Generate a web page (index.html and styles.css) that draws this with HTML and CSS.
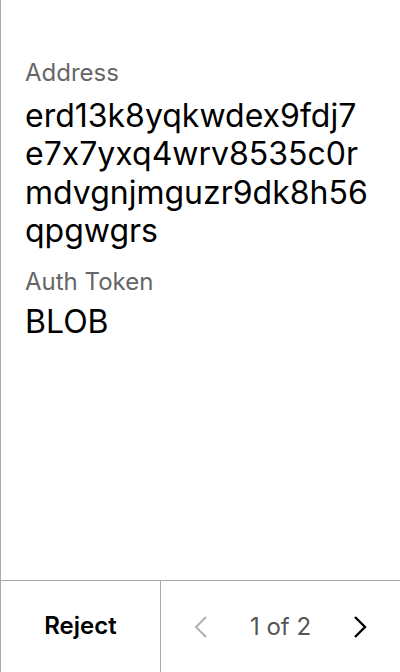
FILE: index.html
```html
<!DOCTYPE html>
<html>
<head>
<meta charset="utf-8">
<link rel="stylesheet" href="styles.css">
</head>
<body>
<div class="screen">
  <main class="content">
    <div class="label">Address</div>
    <div class="value">erd13k8yqkwdex9fdj7<br>e7x7yxq4wrv8535c0r<br>mdvgnjmguzr9dk8h56<br>qpgwgrs</div>
    <div class="label label-next">Auth Token</div>
    <div class="value value-token">BLOB</div>
  </main>
  <footer class="footer">
    <div class="reject">Reject</div>
    <div class="pager">
      <svg class="chev" width="16" height="24" viewBox="0 0 16 24"><path d="M13 2 L3 12 L13 22" fill="none" stroke="#b0b0b0" stroke-width="2"/></svg>
      <span class="count">1 of 2</span>
      <svg class="chev" width="16" height="24" viewBox="0 0 16 24"><path d="M3 2 L13 12 L3 22" fill="none" stroke="#000" stroke-width="2.4"/></svg>
    </div>
  </footer>
</div>
</body>
</html>
```
FILE: styles.css
```css
html, body { margin: 0; padding: 0; background: #fff; }
body {
  font-family: Inter, "Noto Sans", sans-serif;
  color: #000;
  font-feature-settings: "calt" 0;
}
.screen {
  width: 400px;
  height: 672px;
  box-sizing: border-box;
  border-left: 1px solid #a9a9a9;
  display: flex;
  flex-direction: column;
}
.content {
  flex: 1;
  padding: 58px 8px 0 24px;
}
.label {
  font-size: 24px;
  line-height: 30px;
  color: #666;
}
.label-next { margin-top: 16px; }
.value {
  font-size: 32px;
  line-height: 38.4px;
  margin-top: 9px;
}
.value-token { margin-top: 6px; }
.footer {
  height: 92px;
  box-sizing: border-box;
  border-top: 1px solid #a9a9a9;
  display: flex;
}
.reject {
  width: 159px;
  border-right: 1px solid #a9a9a9;
  display: flex;
  align-items: center;
  justify-content: center;
  font-size: 24px;
  font-weight: 600;
  padding-bottom: 2px;
}
.pager {
  flex: 1;
  display: flex;
  align-items: center;
  justify-content: space-between;
  padding: 0 32px 0 32px;
}
.count {
  font-size: 24px;
  color: #555;
}
```
